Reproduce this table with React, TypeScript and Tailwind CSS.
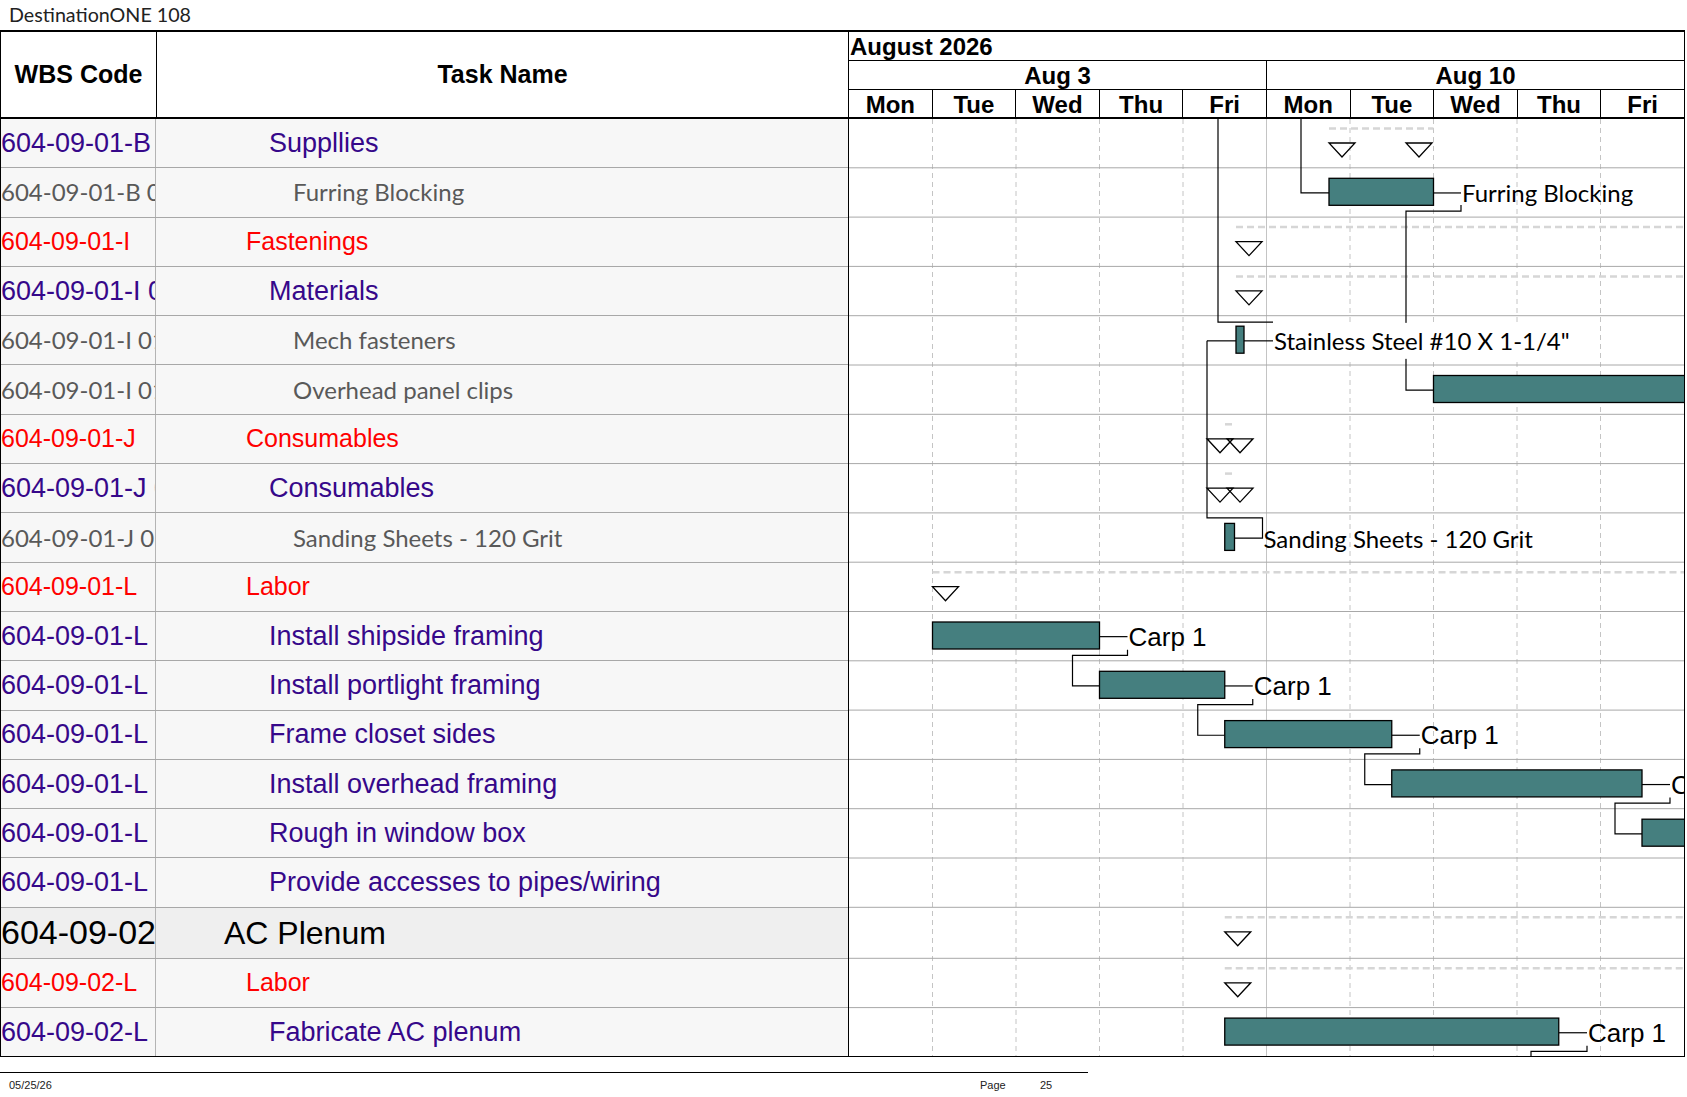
import React from 'react';

type Kind = 'red' | 'purple' | 'gray' | 'big';

type Row = { code: string; name: string; kind: Kind };

const rows: Row[] = [
  { code: '604-09-01-B', name: 'Suppllies', kind: 'purple' },
  { code: '604-09-01-B 01', name: 'Furring Blocking', kind: 'gray' },
  { code: '604-09-01-I', name: 'Fastenings', kind: 'red' },
  { code: '604-09-01-I 01', name: 'Materials', kind: 'purple' },
  { code: '604-09-01-I 01 01', name: 'Mech fasteners', kind: 'gray' },
  { code: '604-09-01-I 01 02', name: 'Overhead panel clips', kind: 'gray' },
  { code: '604-09-01-J', name: 'Consumables', kind: 'red' },
  { code: '604-09-01-J 01', name: 'Consumables', kind: 'purple' },
  { code: '604-09-01-J 01 01', name: 'Sanding Sheets - 120 Grit', kind: 'gray' },
  { code: '604-09-01-L', name: 'Labor', kind: 'red' },
  { code: '604-09-01-L', name: 'Install shipside framing', kind: 'purple' },
  { code: '604-09-01-L', name: 'Install portlight framing', kind: 'purple' },
  { code: '604-09-01-L', name: 'Frame closet sides', kind: 'purple' },
  { code: '604-09-01-L', name: 'Install overhead framing', kind: 'purple' },
  { code: '604-09-01-L', name: 'Rough in window box', kind: 'purple' },
  { code: '604-09-01-L', name: 'Provide accesses to pipes/wiring', kind: 'purple' },
  { code: '604-09-02', name: 'AC Plenum', kind: 'big' },
  { code: '604-09-02-L', name: 'Labor', kind: 'red' },
  { code: '604-09-02-L', name: 'Fabricate AC plenum', kind: 'purple' },
];

const codeClass: Record<Kind, string> = {
  red: "text-[25px] text-[#ff0000] font-['Liberation_Sans',Arial,sans-serif]",
  purple: "text-[27px] text-[#36088a] font-['Liberation_Sans',Arial,sans-serif]",
  gray: "text-[24px] text-[#595959] font-['Lato',sans-serif]",
  big: "text-[34px] text-black font-['Liberation_Sans',Arial,sans-serif]",
};

const nameClass: Record<Kind, string> = {
  red: "pl-[90px] text-[25px] text-[#ff0000] font-['Liberation_Sans',Arial,sans-serif]",
  purple: "pl-[113px] text-[27px] text-[#36088a] font-['Liberation_Sans',Arial,sans-serif]",
  gray: "pl-[137px] text-[24px] text-[#595959] font-['Lato',sans-serif]",
  big: "pl-[68px] text-[32px] text-black font-['Liberation_Sans',Arial,sans-serif]",
};

const RH = 49.3;
const top = (i: number) => (i <= 16 ? i * RH : 16 * RH + 51 + (i - 17) * RH);
const mid = (i: number) => (top(i) + top(i + 1)) / 2;
const DAY = 83.5;
const H = top(19) - 1;

const bars: [number, number, number][] = [
  [1, 480, 584.5],
  [4, 387, 395],
  [5, 584.5, 840],
  [8, 375.75, 385.5],
  [10, 83.5, 250.5],
  [11, 250.5, 375.75],
  [12, 375.75, 542.75],
  [13, 542.75, 793],
  [14, 793, 840],
  [18, 375.75, 709.75],
];

const marks: [number, number][] = [
  [0, 480],
  [0, 557],
  [2, 387],
  [3, 387],
  [6, 358],
  [6, 378],
  [7, 358],
  [7, 378],
  [9, 83.5],
  [16, 375.75],
  [17, 375.75],
];

const summaries: [number, number, number][] = [
  [0, 480, 584.5],
  [2, 387, 835],
  [3, 387, 835],
  [6, 376, 386],
  [7, 376, 386],
  [9, 83.5, 835],
  [16, 375.75, 835],
  [17, 375.75, 835],
];

// labor chain: row, bar end, label x, next bar start
const chain: [number, number, number, number][] = [
  [10, 250.5, 278.5, 250.5],
  [11, 375.75, 403.75, 375.75],
  [12, 542.75, 570.75, 542.75],
  [13, 793, 821, 793],
];

const Chart = () => {
  const paths: string[] = [
    `M452 0 V${mid(1)} H480`,
    `M369 0 V${top(4) + 6} H424`,
    `M584.5 ${mid(1)} H612`,
    `M612 ${mid(1) + 12} V${top(2) - 6.5} H557 V${mid(5)} H584.5`,
    `M358 ${mid(4)} H387`,
    `M395 ${mid(4)} H424`,
    `M358 ${mid(4)} V${top(8) + 4.5} H413.5 V${mid(8)} H385.5`,
    `M709.75 ${mid(18)} H738`,
    `M738 ${mid(18) + 13} V${top(19) - 6} H682 V${H + 2}`,
  ];
  chain.forEach(([r, end, lx, next]) => {
    paths.push(`M${end} ${mid(r)} H${lx}`);
    paths.push(`M${lx} ${mid(r) + 13} V${top(r + 1) - 6} H${next - 27} V${mid(r + 1)} H${next}`);
  });

  return (
    <svg width={835} height={H} className="block">
      <rect x={0} y={0} width={835} height={H} fill="#ffffff" />
      {Array.from({ length: 9 }, (_, k) => k + 1).map((d) => (
        <line
          key={d}
          x1={d * DAY}
          x2={d * DAY}
          y1={0}
          y2={H}
          stroke="#c4c4c4"
          strokeWidth={1}
          strokeDasharray={d === 5 ? undefined : '5 4'}
        />
      ))}
      {Array.from({ length: 18 }, (_, i) => (
        <line key={i} x1={0} x2={835} y1={top(i + 1) - 0.5} y2={top(i + 1) - 0.5} stroke="#a8a8a8" strokeWidth={1} />
      ))}
      {summaries.map(([r, a, b], i) => (
        <line key={i} x1={a} x2={b} y1={top(r) + 9.5} y2={top(r) + 9.5} stroke="#d6d6d6" strokeWidth={2.5} strokeDasharray="7 4" />
      ))}
      {paths.map((d, i) => (
        <path key={i} d={d} fill="none" stroke="#000" strokeWidth={1.2} />
      ))}
      {bars.map(([r, a, b], i) => (
        <rect key={i} x={a} y={top(r) + 10} width={b - a} height={27} fill="#457f7f" stroke="#000" strokeWidth={1.3} />
      ))}
      {marks.map(([r, x], i) => (
        <polygon
          key={i}
          points={`${x},${top(r) + 24} ${x + 26},${top(r) + 24} ${x + 13},${top(r) + 38}`}
          fill="none"
          stroke="#000"
          strokeWidth={1.3}
        />
      ))}
      <rect x={424} y={mid(4) - 18} width={300} height={36} fill="#ffffff" />
      <g fontFamily="Lato, sans-serif" fontSize={24} fill="#000" dominantBaseline="central">
        <text x={613} y={mid(1)}>Furring Blocking</text>
        <text x={425} y={mid(4)}>Stainless Steel #10 X 1-1/4"</text>
        <text x={414.5} y={mid(8)}>Sanding Sheets - 120 Grit</text>
      </g>
      <g fontFamily="'Liberation Sans', Arial, sans-serif" fontSize={26} fill="#000" dominantBaseline="central">
        {chain.map(([r, , lx]) => (
          <text key={r} x={lx + 1} y={mid(r)}>
            Carp 1
          </text>
        ))}
        <text x={739} y={mid(18)}>Carp 1</text>
      </g>
    </svg>
  );
};

const days = ['Mon', 'Tue', 'Wed', 'Thu', 'Fri', 'Mon', 'Tue', 'Wed', 'Thu', 'Fri'];

const App = () => {
  return (
    <div className="w-[1687px] h-[1097px] bg-white overflow-hidden">
      <div className="h-[30px] flex items-center pl-[9px] text-[19.7px] text-[#222] font-['Lato',sans-serif]">
        DestinationONE 108
      </div>

      <div className="flex w-[1685px] border-t-2 border-black">
        <div className="w-[848px] border-l border-black">
          <div className="h-[87px] flex border-b-2 border-black font-['Liberation_Sans',Arial,sans-serif] font-bold text-[25px] text-black">
            <div className="w-[156px] flex items-center justify-center border-r border-black">WBS Code</div>
            <div className="flex-1 flex items-center justify-center">Task Name</div>
          </div>
          {rows.map((r, i) => (
            <div
              key={i}
              className={`flex border-b ${i === rows.length - 1 ? 'border-black' : 'border-[#a8a8a8]'} ${
                r.kind === 'big' ? 'h-[51px] bg-[#efefef]' : 'h-[49.3px] bg-[#f7f7f7]'
              }`}
            >
              <div className={`w-[155px] shrink-0 flex items-center overflow-hidden whitespace-nowrap border-r border-[#b4b4b4] ${codeClass[r.kind]}`}>
                {r.code}
              </div>
              <div className={`flex-1 flex items-center whitespace-nowrap ${nameClass[r.kind]}`}>{r.name}</div>
            </div>
          ))}
        </div>

        <div className="w-[837px] border-l border-r border-black bg-white">
          <div className="font-['Liberation_Sans',Arial,sans-serif] font-bold text-[24px] leading-none text-black border-b-2 border-black">
            <div className="h-[29px] flex items-center pl-[1px] pt-[2px] border-b border-black">August 2026</div>
            <div className="h-[29px] flex border-b border-black">
              <div className="flex-1 flex items-center justify-center pt-[2px] border-r border-black">Aug 3</div>
              <div className="flex-1 flex items-center justify-center pt-[2px]">Aug 10</div>
            </div>
            <div className="h-[27px] flex">
              {days.map((d, i) => (
                <div key={i} className={`flex-1 h-full flex items-center justify-center pt-[2px] ${i < 9 ? 'border-r border-black' : ''}`}>
                  {d}
                </div>
              ))}
            </div>
          </div>
          <div className="border-b border-black">
            <Chart />
          </div>
        </div>
      </div>

      <div className="mt-[15px] w-[1088px] border-t border-black">
        <div className="h-[24px] text-[11px] text-[#222] font-['Liberation_Sans',Arial,sans-serif]">
          <div className="flex items-center h-full">
            <span className="pl-[9px] w-[980px]">05/25/26</span>
            <span className="w-[60px]">Page</span>
            <span>25</span>
          </div>
        </div>
      </div>
    </div>
  );
};

export default App;
